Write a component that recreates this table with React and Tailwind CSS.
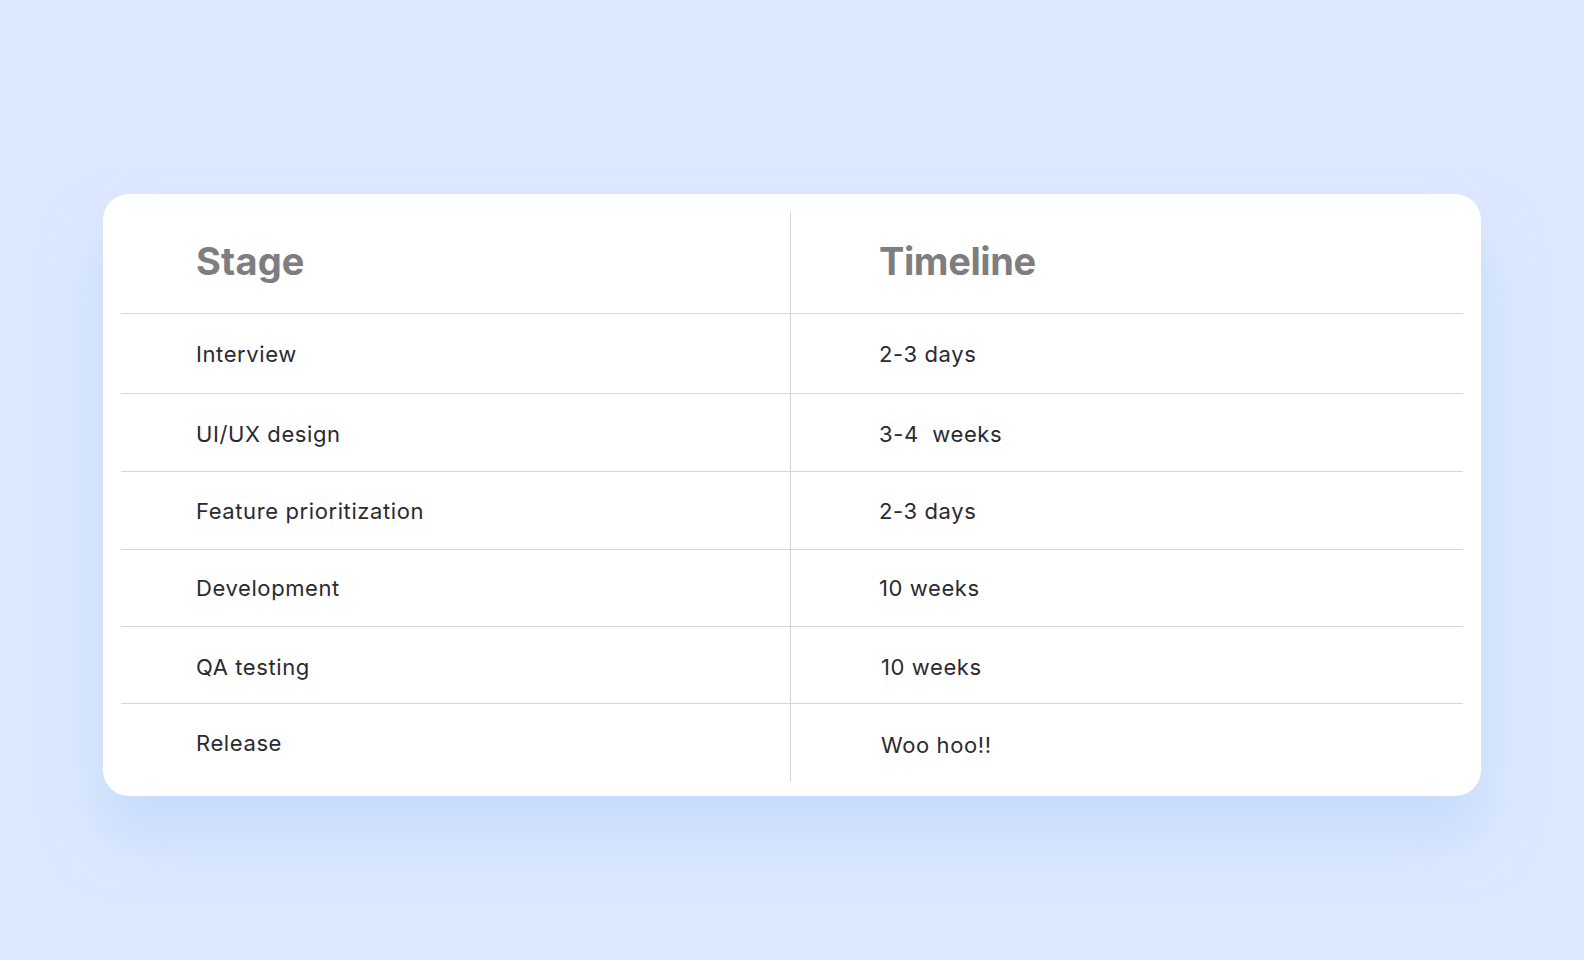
import React from 'react';

const rows = [
  { stage: 'Interview', time: '2-3 days', h: 'h-[80px]', sp: 'pt-[2px]', tp: 'pt-[2px] pl-[88px]' },
  { stage: 'UI/UX design', time: '3-4  weeks', h: 'h-[78px]', sp: 'pt-[3px]', tp: 'pt-[3px] pl-[88px]' },
  { stage: 'Feature prioritization', time: '2-3 days', h: 'h-[78px]', sp: 'pt-[2px]', tp: 'pt-[2px] pl-[88px]' },
  { stage: 'Development', time: '10 weeks', h: 'h-[77px]', sp: 'pt-[1px]', tp: 'pt-[1px] pl-[88px]' },
  { stage: 'QA testing', time: '10 weeks', h: 'h-[77px]', sp: 'pt-[4px]', tp: 'pt-[4px] pl-[90px]' },
  { stage: 'Release', time: 'Woo hoo!!', h: 'h-[79px]', sp: 'pt-[1px]', tp: 'pt-[5px] pl-[90px]' },
];

export default function App() {
  return (
    <div
      className="min-h-[960px] w-full bg-[#dce8fe] pt-[194px]"
      style={{ fontFamily: 'Inter, "Noto Sans", sans-serif' }}
    >
      <div className="mx-auto w-[1378px] rounded-[26px] bg-white px-[18px] pb-[14px] pt-[18px] shadow-[0_40px_55px_rgba(184,212,252,0.6)]">
        {/* Header */}
        <div className="grid h-[101px] grid-cols-[670px_672px]">
          <div className="flex items-center border-r border-[#d4d4d4] pb-[2px] pl-[75px]">
            <h2 className="text-[38px] font-bold tracking-[0.2px] text-[#7e7d80]">Stage</h2>
          </div>
          <div className="flex items-center pb-[2px] pl-[88px]">
            <h2 className="text-[38px] font-bold tracking-[-0.4px] text-[#7e7d80]">Timeline</h2>
          </div>
        </div>

        {rows.map((r) => (
          <div key={r.stage} className={`grid grid-cols-[670px_672px] border-t border-[#d6d6d6] ${r.h}`}>
            <div className={`flex items-center border-r border-[#d4d4d4] pl-[75px] ${r.sp}`}>
              <span className="whitespace-pre text-[22px] tracking-[0.6px] text-[#2b2a30]">{r.stage}</span>
            </div>
            <div className={`flex items-center ${r.tp}`}>
              <span className="whitespace-pre text-[22px] tracking-[0.6px] text-[#2b2a30]">{r.time}</span>
            </div>
          </div>
        ))}
      </div>
    </div>
  );
}
